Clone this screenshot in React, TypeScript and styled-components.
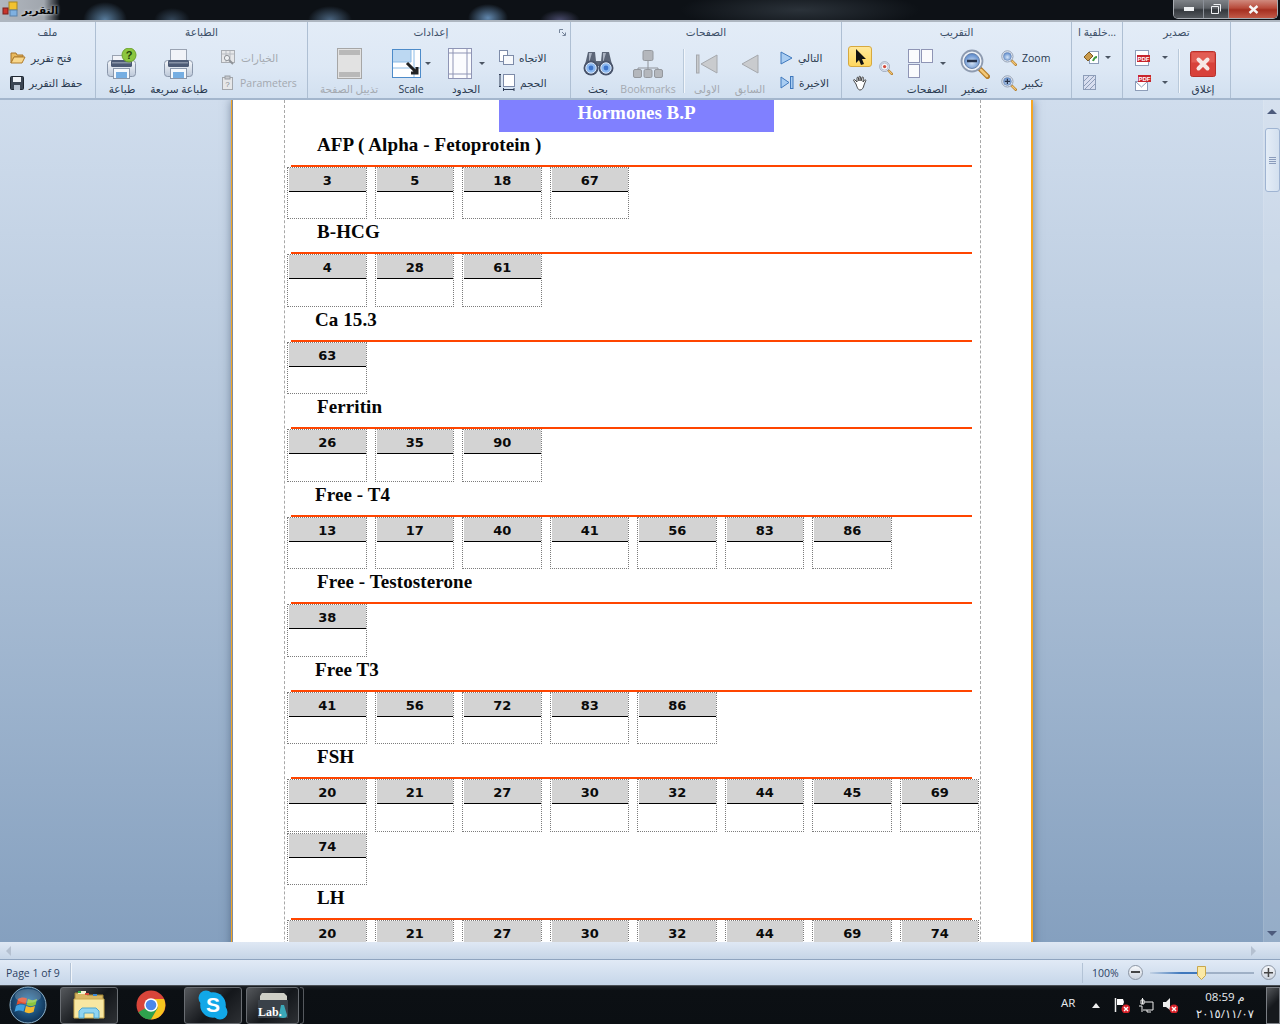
import React from 'react'
import styled, { createGlobalStyle } from 'styled-components'

const GlobalStyle = createGlobalStyle`
  html, body { margin: 0; padding: 0; background: #0c0f13; }
  #root { width: 1280px; height: 1024px; overflow: hidden; }
`

const UI_FONT = `"Open Sans", "DejaVu Sans", sans-serif`

const Screen = styled.div`
  width: 1280px;
  height: 1024px;
  display: flex;
  flex-direction: column;
  overflow: hidden;
  font-family: ${UI_FONT};
`

/* ---------- title bar ---------- */
const TitleBar = styled.div`
  height: 22px;
  flex: none;
  box-sizing: border-box;
  display: flex;
  align-items: center;
  padding: 0 2px 0 2px;
  border-bottom: 2px solid #aeb6c0;
  background:
    linear-gradient(90deg, rgba(186, 192, 200, 0.95) 0, rgba(186, 192, 200, 0.85) 44px, rgba(186, 192, 200, 0) 60px),
    radial-gradient(ellipse 22px 18px at 105px 20px, rgba(120, 170, 215, 0.7), transparent),
    radial-gradient(ellipse 18px 12px at 172px 20px, rgba(110, 150, 190, 0.4), transparent),
    radial-gradient(ellipse 22px 14px at 330px 20px, rgba(125, 170, 215, 0.55), transparent),
    radial-gradient(ellipse 20px 14px at 488px 18px, rgba(125, 175, 225, 0.75), transparent),
    radial-gradient(ellipse 20px 10px at 560px 20px, rgba(130, 130, 190, 0.5), transparent),
    radial-gradient(ellipse 120px 20px at 800px 10px, rgba(50, 58, 66, 0.8), transparent),
    #0d1116;
`

const TitleText = styled.span`
  margin-left: 2px;
  font-size: 10.5px;
  font-weight: 700;
  color: #060606;
  text-shadow: 0 0 3px #eef2f6;
`

const WindowButtons = styled.div`
  margin-left: auto;
  display: flex;
  height: 18px;
  align-self: flex-start;
  border: 1px solid #a8acb2;
  border-top: 0;
  border-radius: 0 0 5px 5px;
  overflow: hidden;
`

const WindowButton = styled.div<{ $w: number; $close?: boolean }>`
  width: ${p => p.$w}px;
  display: flex;
  align-items: center;
  justify-content: center;
  border-left: 1px solid #8b9098;
  background: ${p =>
    p.$close
      ? 'linear-gradient(#d08a7e 0, #b84a3a 45%, #a52f20 55%, #c25a48 100%)'
      : 'linear-gradient(#7f8388 0, #5d6166 45%, #34383d 55%, #55595e 100%)'};
  &:first-child { border-left: 0; }
`

/* ---------- ribbon ---------- */
const Ribbon = styled.div`
  height: 78px;
  flex: none;
  display: flex;
  background: linear-gradient(#e3ecf7 0, #dde8f5 60%, #d2e0f0 100%);
  border-bottom: 2px solid #a3b6cd;
  box-sizing: border-box;
`

const Group = styled.section<{ $w: number }>`
  position: relative;
  width: ${p => p.$w}px;
  flex: none;
  box-sizing: border-box;
  border-right: 1px solid #aebfd3;
  display: flex;
  flex-direction: column;
`

const GroupTitle = styled.div<{ $shift?: number }>`
  height: 20px;
  margin-bottom: 3px;
  padding-right: ${p => p.$shift ?? 0}px;
  flex: none;
  display: flex;
  align-items: center;
  justify-content: center;
  font-size: 10.5px;
  color: #3c4f68;
  white-space: nowrap;
`

const Launcher = styled.span`
  position: absolute;
  top: 7px;
  right: 4px;
  width: 7px;
  height: 7px;
  display: flex;
`

const GroupBody = styled.div<{ $pad: number }>`
  flex: 1;
  display: flex;
  align-items: flex-start;
  padding-left: ${p => p.$pad}px;
`

const BigButton = styled.div<{ $w: number; $off?: boolean }>`
  width: ${p => p.$w}px;
  flex: none;
  display: flex;
  flex-direction: column;
  align-items: center;
  color: ${p => (p.$off ? '#a4a9b0' : '#2a3a50')};
`

const BigIcon = styled.div<{ $gap?: number }>`
  height: 37px;
  display: flex;
  align-items: center;
  gap: ${p => p.$gap ?? 7}px;
`

const BigLabel = styled.div`
  height: 15px;
  line-height: 15px;
  font-size: 10.5px;
  white-space: nowrap;
`

const Stack = styled.div<{ $ml?: number }>`
  display: flex;
  flex-direction: column;
  flex: none;
  margin-left: ${p => p.$ml ?? 0}px;
`

const SmallButton = styled.div<{ $off?: boolean; $gap?: number }>`
  height: 25px;
  display: flex;
  align-items: center;
  gap: ${p => p.$gap ?? 5}px;
  padding: 0 3px;
  font-size: 10.5px;
  white-space: nowrap;
  color: ${p => (p.$off ? '#a4a9b0' : '#2a3a50')};
`

const Separator = styled.div<{ $l: number; $r: number }>`
  width: 1px;
  height: 44px;
  margin: 4px ${p => p.$r}px 0 ${p => p.$l}px;
  flex: none;
  background: #b9c9da;
  box-shadow: 1px 0 0 #f2f6fb;
`

const DropArrow = styled.span`
  width: 0;
  height: 0;
  flex: none;
  border-style: solid;
  border-width: 3px 3px 0;
  border-color: #4b5563 transparent transparent;
`

const CursorColumn = styled.div`
  display: flex;
  flex-direction: column;
  align-items: center;
  width: 24px;
  margin-top: 1px;
`

const CursorButton = styled.div`
  width: 24px;
  height: 21px;
  box-sizing: border-box;
  border: 1px solid #d7a93f;
  border-radius: 3px;
  background: linear-gradient(#ffe89a, #ffd75e);
  display: flex;
  align-items: center;
  justify-content: center;
`

const HandSlot = styled.div`
  margin-top: 8px;
  display: flex;
`

const MiniLens = styled.div`
  margin: 16px 10px 0 7px;
  display: flex;
`

/* ---------- viewer ---------- */
const Viewer = styled.div`
  flex: 1;
  min-height: 0;
  display: flex;
  background: linear-gradient(#d0dded 0, #b4c6db 40%, #85a0bf 100%);
`

const PageArea = styled.div`
  flex: 1;
  overflow: hidden;
  padding-left: 231px;
`

const Sheet = styled.div`
  width: 802px;
  height: 1100px;
  box-sizing: border-box;
  background: #fff;
  border-left: 1px solid #f5a623;
  border-right: 2px solid #f5a623;
  box-shadow: 0 0 9px rgba(40, 60, 90, 0.5), inset 1px 0 0 #7d8ba0;
  padding-left: 52px;
`

const Column = styled.div`
  width: 697px;
  height: 100%;
  box-sizing: border-box;
  border-left: 1px dashed #a8a8a8;
  border-right: 1px dashed #a8a8a8;
  padding-left: 2px;
`

const Band = styled.div`
  width: 275px;
  height: 31.5px;
  margin-left: 212px;
  background: #8080ff;
  color: #fff;
  font: 700 19px/26px "Liberation Serif", serif;
  text-align: center;
`

const Heading = styled.h2<{ $indent: number }>`
  margin: 0 0 0 4px;
  width: 681px;
  height: 35px;
  box-sizing: border-box;
  padding: 1px 0 0 ${p => p.$indent}px;
  border-bottom: 2px solid #ff4500;
  font: 700 19px/24px "Liberation Serif", serif;
  letter-spacing: 0.1px;
  color: #050505;
  white-space: pre;
`

const Cells = styled.div`
  display: grid;
  grid-template-columns: repeat(8, 79.5px);
  column-gap: 8px;
  grid-auto-rows: 52.5px;
  row-gap: 1px;
`

const Cell = styled.div`
  box-sizing: border-box;
  border: 1px dotted #7c7c7c;
  padding-left: 1px;
`

const CellHead = styled.div`
  height: 24px;
  box-sizing: border-box;
  background: #d3d3d3;
  border-bottom: 1px solid #000;
  font: 700 13px/25px "DejaVu Sans", sans-serif;
  color: #0a0a0a;
  text-align: center;
`

const VScroll = styled.div`
  width: 17px;
  flex: none;
  display: flex;
  flex-direction: column;
  align-items: center;
  background: rgba(255, 255, 255, 0.13);
  border-left: 1px solid rgba(255, 255, 255, 0.1);
  box-sizing: border-box;
`

const ArrowUp = styled.span`
  margin-top: 9px;
  width: 0;
  height: 0;
  border-style: solid;
  border-width: 0 5px 5px;
  border-color: transparent transparent #4d5b7c;
`

const Thumb = styled.div`
  width: 15px;
  height: 64px;
  margin-top: 14px;
  box-sizing: border-box;
  border: 1px solid #9fb4d2;
  border-radius: 3px;
  background: linear-gradient(90deg, #e4edf7, #d3e0ef);
  display: flex;
  align-items: center;
  justify-content: center;
`

const Grip = styled.div`
  width: 7px;
  height: 7px;
  background: repeating-linear-gradient(#8a9cbc 0 1px, transparent 1px 2px);
`

const ArrowDown = styled.span`
  margin-top: auto;
  margin-bottom: 6px;
  width: 0;
  height: 0;
  border-style: solid;
  border-width: 5px 5px 0;
  border-color: #4d5b7c transparent transparent;
`

const HScroll = styled.div`
  height: 17px;
  flex: none;
  display: flex;
  align-items: center;
  justify-content: space-between;
  padding: 0 24px 0 6px;
  background: linear-gradient(#dfe8f4, #c6d5e7);
`

const HArrow = styled.span<{ $dir: 'left' | 'right' }>`
  width: 0;
  height: 0;
  border-style: solid;
  border-width: 5px 0 5px 5px;
  border-color: transparent transparent transparent #b4c0d0;
  transform: ${p => (p.$dir === 'left' ? 'rotate(180deg)' : 'none')};
`

/* ---------- status bar ---------- */
const StatusBar = styled.div`
  height: 26px;
  flex: none;
  box-sizing: border-box;
  display: flex;
  align-items: center;
  border-top: 1px solid #8fa4bf;
  background: linear-gradient(#e1eaf6, #c6d6e9);
  font-size: 10.5px;
  color: #2c4163;
`

const PageInfo = styled.div`
  width: 64px;
  padding-left: 6px;
  border-right: 1px solid #b3c3d6;
  box-shadow: 1px 0 0 #f1f5fa;
  line-height: 20px;
`

const ZoomArea = styled.div`
  margin-left: auto;
  width: 188px;
  height: 20px;
  display: flex;
  align-items: center;
  padding-left: 9px;
  border-left: 1px solid #b3c3d6;
`

const ZoomValue = styled.span`
  width: 36px;
  flex: none;
`

const Round = styled.span`
  width: 15px;
  height: 15px;
  flex: none;
  box-sizing: border-box;
  border: 1px solid #8b95a3;
  border-radius: 50%;
  background: linear-gradient(#f6f8fb, #cdd4de);
  display: flex;
  align-items: center;
  justify-content: center;
`

const Track = styled.div`
  position: relative;
  width: 104px;
  height: 2px;
  margin: 0 7px;
  flex: none;
  background: linear-gradient(90deg, #c3d2e4 0, #3f78bd 30%, #3f78bd 48%, #9fb0c6 49%, #9fb0c6 100%);
`

const Knob = styled.span`
  position: absolute;
  left: 47px;
  top: -6px;
  display: flex;
`

/* ---------- taskbar ---------- */
const Taskbar = styled.div`
  height: 39px;
  flex: none;
  display: flex;
  align-items: center;
  background: linear-gradient(#1b1f24 0, #0c1014 12%, #0b0f13 100%);
  border-top: 1px solid #4a4f55;
  box-sizing: border-box;
`

const Orb = styled.div`
  width: 56px;
  margin-right: 4px;
  display: flex;
  justify-content: center;
`

const TaskButton = styled.div<{ $w: number; $plain?: boolean }>`
  width: ${p => p.$w}px;
  height: 37px;
  margin-right: 4px;
  flex: none;
  box-sizing: border-box;
  display: flex;
  align-items: center;
  justify-content: center;
  border-radius: 3px;
  border: 1px solid ${p => (p.$plain ? 'transparent' : '#6a6e73')};
  background: ${p =>
    p.$plain ? 'none' : 'linear-gradient(135deg, #55585c 0, #2a2d31 35%, #14171b 55%, #2d3034 100%)'};
`

const TaskEdge = styled.div`
  width: 4px;
  height: 37px;
  margin-left: -3px;
  border: 1px solid #55595e;
  border-left: 0;
  border-radius: 0 3px 3px 0;
  box-sizing: border-box;
`

const Tray = styled.div`
  margin-left: auto;
  display: flex;
  align-items: center;
  color: #e8ecf0;
`

const Lang = styled.span`
  font-size: 11.5px;
  width: 31px;
  padding-bottom: 6px;
`

const TrayIcons = styled.div`
  display: flex;
  align-items: center;
  gap: 8px;
  svg:first-child { margin-right: 6px; }
`

const Clock = styled.div`
  width: 72px;
  margin-left: 11px;
  font-size: 11.5px;
  line-height: 17px;
  text-align: center;
`

const DateLine = styled.div`
  direction: ltr;
  unicode-bidi: bidi-override;
`

const ShowDesktop = styled.div`
  width: 14px;
  height: 37px;
  margin-left: 5px;
  box-sizing: border-box;
  border: 1px solid #7a7e84;
  background: linear-gradient(135deg, #55585c, #16191d 50%);
`

/* ---------- icons ---------- */
const FolderIcon = () => (
  <svg width="16" height="12" viewBox="0 0 16 12">
    <path d="M1 1h5l1 2h6v2H4L1 11z" fill="#e8b95e" stroke="#a8752a" />
    <path d="M1 11l3-6h11l-3 6z" fill="#f8d78c" stroke="#b07c2c" />
  </svg>
)

const SaveIcon = () => (
  <svg width="14" height="14" viewBox="0 0 14 14">
    <rect x=".5" y=".5" width="13" height="13" rx="1" fill="#3b4552" stroke="#1f2731" />
    <rect x="3" y="1" width="8" height="5" fill="#eef2f7" />
    <rect x="4" y="9" width="6" height="5" fill="#b9c4d2" />
  </svg>
)

const Printer = ({ badge }: { badge?: boolean }) => (
  <svg width="32" height="32" viewBox="0 0 32 32">
    <defs>
      <linearGradient id="printerBody" x1="0" y1="0" x2="0" y2="1">
        <stop offset="0" stopColor="#f7f9fc" />
        <stop offset="1" stopColor="#bcc8d9" />
      </linearGradient>
    </defs>
    <rect x={badge ? 6.5 : 7.5} y={badge ? 7.5 : 1.5} width="16" height="12" fill="#f1f3f8" stroke="#9aa3b2" />
    <rect x="1.5" y="12.5" width="28" height="16" rx="3" fill="url(#printerBody)" stroke="#8a97ab" />
    <rect x="5" y="12" width="21" height="7" rx="1.5" fill="#4c5a75" />
    <rect x="6" y="14" width="19" height="1.5" fill="#8691a6" />
    <rect x="7.5" y="20.5" width="16" height="10" fill="#f5f8fc" stroke="#8a97ab" />
    <rect x="10" y="24" width="11" height="6" fill="#76aee2" />
    {badge && (
      <g>
        <circle cx="23" cy="7" r="7" fill="#8cc63f" stroke="#6ba12c" />
        <text x="23" y="11" fontSize="11" fontWeight="700" textAnchor="middle" fill="#23420a" fontFamily="Liberation Sans">?</text>
      </g>
    )}
  </svg>
)

const OptionsIcon = () => (
  <svg width="15" height="15" viewBox="0 0 15 15">
    <rect x=".5" y=".5" width="13" height="12" fill="#e6e7e9" stroke="#a9adb3" />
    <path d="M1 4h12M5 1v11M9 1v11" stroke="#b7bbc1" />
    <circle cx="6" cy="8" r="2.6" fill="#eef0f2" stroke="#8f9399" />
    <path d="M8 10l4 4" stroke="#8f9399" strokeWidth="2" />
  </svg>
)

const ParamsIcon = () => (
  <svg width="14" height="15" viewBox="0 0 14 15">
    <rect x="1.5" y="2.5" width="10" height="12" fill="#e6e7e9" stroke="#a3a7ad" />
    <rect x="4" y="1" width="5" height="3" fill="#c7cacf" stroke="#9a9ea4" />
    <text x="6.5" y="12" fontSize="8" textAnchor="middle" fill="#85898f" fontFamily="Liberation Sans">?</text>
  </svg>
)

const FooterIcon = () => (
  <svg width="25" height="31" viewBox="0 0 25 31">
    <rect x=".5" y=".5" width="24" height="30" fill="#e2e2e2" stroke="#a6a6a6" />
    <rect x="2" y="2" width="21" height="5" fill="#b9b9b9" />
    <rect x="2" y="24" width="21" height="5" fill="#b9b9b9" />
  </svg>
)

const ScaleIcon = () => (
  <svg width="29" height="29" viewBox="0 0 29 29">
    <rect x=".5" y=".5" width="28" height="28" fill="#fff" stroke="#4d8bc9" />
    <rect x="1" y="1" width="18" height="12" fill="#bcd8f2" />
    <path d="M1 13h18V1M1 19h27M22 1v27" stroke="#8dbce6" fill="none" />
    <path d="M15 14l9 9M19 24h6v-6" stroke="#222" strokeWidth="3" fill="none" />
  </svg>
)

const MarginsIcon = () => (
  <svg width="24" height="31" viewBox="0 0 24 31">
    <rect x=".5" y=".5" width="23" height="30" fill="#fbfcfe" stroke="#8f95b5" />
    <path d="M5 0v31M19 0v31M0 5h24M0 26h24" stroke="#8f95b5" />
  </svg>
)

const OrientIcon = () => (
  <svg width="15" height="15" viewBox="0 0 15 15">
    <rect x=".5" y=".5" width="8" height="11" fill="#fff" stroke="#7d8ba8" />
    <rect x="4.5" y="5.5" width="10" height="9" fill="#f7f9fc" stroke="#7d8ba8" />
  </svg>
)

const SizeIcon = () => (
  <svg width="16" height="17" viewBox="0 0 16 17">
    <rect x="4.5" y=".5" width="11" height="12" fill="#fff" stroke="#7d8ba8" />
    <path d="M1 0v13M0 .5h2M0 12.5h2M4 15.5h11M4.5 14v3M15 14v3" stroke="#2d3b55" />
  </svg>
)

const Binoculars = () => (
  <svg width="31" height="26" viewBox="0 0 31 26">
    <path d="M5 1h7l1 9h5l1-9h7l4 17H20l-2-3h-5l-2 3H1z" fill="#5c6678" />
    <path d="M6 2h3l-3 10zM20 2h3l-3 10z" fill="#aab3c2" />
    <circle cx="8" cy="17" r="7.5" fill="#48536a" />
    <circle cx="23" cy="17" r="7.5" fill="#48536a" />
    <circle cx="8" cy="17" r="5.2" fill="#8cb9f0" stroke="#dbe7f8" />
    <circle cx="23" cy="17" r="5.2" fill="#8cb9f0" stroke="#dbe7f8" />
    <circle cx="8" cy="17" r="2.4" fill="#3e75cc" />
    <circle cx="23" cy="17" r="2.4" fill="#3e75cc" />
  </svg>
)

const TreeIcon = () => (
  <svg width="30" height="28" viewBox="0 0 30 28">
    <path d="M15 11v7M5 22v-4h20v4M15 18v4" stroke="#8f9399" fill="none" />
    <rect x="10" y=".5" width="10" height="10" rx="1.5" fill="#b4b7bc" stroke="#94989e" />
    <rect x=".5" y="19.5" width="8" height="8" rx="1.5" fill="#b4b7bc" stroke="#94989e" />
    <rect x="11" y="19.5" width="8" height="8" rx="1.5" fill="#b4b7bc" stroke="#94989e" />
    <rect x="21.5" y="19.5" width="8" height="8" rx="1.5" fill="#b4b7bc" stroke="#94989e" />
  </svg>
)

const GreyFirst = () => (
  <svg width="22" height="20" viewBox="0 0 22 20">
    <rect x=".5" y="1" width="2.5" height="18" fill="#c9cbce" stroke="#a5a8ad" />
    <path d="M21 1v18L5 10z" fill="#c9cbce" stroke="#a5a8ad" />
  </svg>
)

const GreyPrev = () => (
  <svg width="18" height="20" viewBox="0 0 18 20">
    <path d="M17 1v18L1 10z" fill="#c9cbce" stroke="#a5a8ad" />
  </svg>
)

const BlueNext = () => (
  <svg width="13" height="14" viewBox="0 0 13 14">
    <path d="M1 1v12l11-6z" fill="#a9cdf2" stroke="#3f78bd" />
  </svg>
)

const BlueLast = () => (
  <svg width="14" height="13" viewBox="0 0 14 13">
    <path d="M1 1v11l8-5.5z" fill="#a9cdf2" stroke="#3f78bd" />
    <rect x="10.5" y=".5" width="2.5" height="12" fill="#a9cdf2" stroke="#3f78bd" />
  </svg>
)

const ArrowCursor = () => (
  <svg width="11" height="16" viewBox="0 0 11 16">
    <path d="M1 0v14l3-3 2 5 3-1-2-5h4z" fill="#111" />
  </svg>
)

const HandIcon = () => (
  <svg width="16" height="16" viewBox="0 0 16 16">
    <path d="M4 9L2 6c-1-1 0-2 1-1l2 2V3c0-1 1-1 1.5 0l.5 3V2c0-1 1.5-1 1.5 0l.5 4 1-3.5c.3-1 1.5-.7 1.300.3L11 7l1.500-2c.7-.8 1.700 0 1.200.8L12 10c-.5 3-2 5-4 5-2 0-3-3-4-6z" fill="#fff" stroke="#333" strokeWidth=".9" />
  </svg>
)

const Lens = ({ size, sign, tiny }: { size: number; sign?: '+' | '-'; tiny?: boolean }) => (
  <svg width={size} height={size} viewBox="0 0 30 30">
    <defs>
      <radialGradient id="lensGlass" cx=".5" cy=".6" r=".6">
        <stop offset="0" stopColor="#d6e6f8" />
        <stop offset="1" stopColor="#5584c8" />
      </radialGradient>
    </defs>
    <path d="M18 18l9.5 9.5" stroke="#b67d2a" strokeWidth="5" strokeLinecap="round" />
    <path d="M21 21l6 6" stroke="#f2c878" strokeWidth="2.5" strokeLinecap="round" />
    <circle cx="12" cy="12" r="10.5" fill="#eef2f8" stroke="#8e9bb0" strokeWidth="1.8" />
    <circle cx="12" cy="12" r="7.5" fill={tiny ? '#f7f8fa' : 'url(#lensGlass)'} stroke="#6c86ad" />
    {tiny && <circle cx="12" cy="12" r="3.5" fill="#d24b3c" />}
    {sign && <path d="M7 12h10" stroke="#26324a" strokeWidth="2.5" />}
    {sign === '+' && <path d="M12 7v10" stroke="#26324a" strokeWidth="2.5" />}
  </svg>
)

const PagesIcon = () => (
  <svg width="25" height="29" viewBox="0 0 25 29">
    <rect x=".5" y=".5" width="11" height="13" fill="#fafbfd" stroke="#8f95b5" />
    <rect x="13.5" y=".5" width="11" height="13" fill="#fafbfd" stroke="#8f95b5" />
    <rect x=".5" y="15.5" width="11" height="13" fill="#fafbfd" stroke="#8f95b5" />
  </svg>
)

const PaintIcon = () => (
  <svg width="16" height="15" viewBox="0 0 16 15">
    <rect x="6.5" y="1.5" width="9" height="12" fill="#fff" stroke="#8d9db8" />
    <path d="M1 7l5-5 4 4-5 5z" fill="#c99a4c" stroke="#7c5b22" />
    <path d="M10 11c1-3 2-4 4-4" stroke="#3f9a3f" strokeWidth="2" fill="none" />
  </svg>
)

const HatchIcon = () => (
  <svg width="13" height="15" viewBox="0 0 13 15">
    <rect x=".5" y=".5" width="12" height="14" fill="#d8deef" stroke="#8d9db8" />
    <path d="M1 6l5-5M1 11l10-10M2 14L12 4M7 14l5-5" stroke="#8d9db8" />
  </svg>
)

const PdfIcon = ({ mail }: { mail?: boolean }) => (
  <svg width="16" height="16" viewBox="0 0 16 16">
    {mail ? (
      <g>
        <rect x=".5" y="6.5" width="12" height="9" fill="#fff" stroke="#8d9db8" />
        <path d="M1 7l5.500 5L12 7" stroke="#8d9db8" fill="none" />
      </g>
    ) : (
      <rect x=".5" y=".5" width="13" height="15" fill="#fff" stroke="#8d9db8" />
    )}
    <rect x={mail ? 3 : 2} y={mail ? 0 : 5} width="13" height="7" fill="#c8252c" />
    <text x={mail ? 9.5 : 8.5} y={mail ? 5.8 : 10.8} fontSize="6" fontWeight="700" textAnchor="middle" fill="#fff" fontFamily="Liberation Sans">PDF</text>
  </svg>
)

const CloseIcon = () => (
  <svg width="26" height="26" viewBox="0 0 26 26">
    <rect x=".5" y=".5" width="25" height="25" rx="2" fill="#d8413a" stroke="#b7302a" />
    <rect x="1.5" y="1.5" width="23" height="10" fill="#ea6f66" opacity=".6" />
    <path d="M8.5 8.5l9 9M17.5 8.500l-9 9" stroke="#f6e7e5" strokeWidth="4" strokeLinecap="round" />
  </svg>
)

const LauncherIcon = () => (
  <svg width="7" height="7" viewBox="0 0 7 7">
    <path d="M.5 4V.5H4M3 3l3 3M3.5 6.5h3v-3" stroke="#76859a" fill="none" />
  </svg>
)

const WinOrb = () => (
  <svg width="38" height="38" viewBox="0 0 38 38">
    <defs>
      <radialGradient id="orbFill" cx=".5" cy=".45" r=".6">
        <stop offset="0" stopColor="#2f7fb8" />
        <stop offset="1" stopColor="#0d2a4a" />
      </radialGradient>
    </defs>
    <circle cx="19" cy="19" r="18" fill="url(#orbFill)" stroke="#8fb4cc" strokeWidth="1" />
    <path d="M9 13c3-2 6-2 9-.5l-1.5 6c-3-1.5-6-1.5-9 .5z" fill="#e2502f" />
    <path d="M19 13c3 1.5 6 1.5 9 0l-1.5 6c-3 1.5-6 1.5-9 0z" fill="#8cc63f" />
    <path d="M7 20c3-2 6-2 9-.5l-1.5 6c-3-1.5-6-1.5-9 .5z" fill="#3fa0e0" />
    <path d="M17 20c3 1.5 6 1.5 9 0l-1.5 6c-3 1.5-6 1.5-9 0z" fill="#f4b92f" />
    <ellipse cx="19" cy="10" rx="13" ry="7" fill="#fff" opacity=".2" />
  </svg>
)

const ExplorerIcon = () => (
  <svg width="32" height="30" viewBox="0 0 32 30">
    <path d="M2 3h10l2 2h16v22H2z" fill="#d9b764" stroke="#a08636" />
    <rect x="5" y="1" width="8" height="3" fill="#f4f0d0" />
    <rect x="5" y="1" width="3" height="2" fill="#32b14a" />
    <rect x="12" y="3" width="4" height="2" fill="#d34a3a" />
    <rect x="20" y="4" width="4" height="2" fill="#3a86d3" />
    <path d="M1 9h30v19H1z" fill="#f8e7a2" stroke="#c9a94f" />
    <path d="M6 28v-7l3-3h14l3 3v7h-5v-5H11v5z" fill="#8fd4f2" stroke="#4ea6d0" />
  </svg>
)

const ChromeIcon = () => (
  <svg width="30" height="30" viewBox="0 0 30 30">
    <circle cx="15" cy="15" r="14.5" fill="#d8453a" />
    <path d="M15 15l-12.600 7.300A14.500 14.500 0 0 0 15 29.500l7.300-12z" fill="#2fa24d" />
    <path d="M15 9h13A14.500 14.500 0 0 1 15 29.500l7-12z" fill="#f7c51e" />
    <circle cx="15" cy="15" r="6.8" fill="#fff" />
    <circle cx="15" cy="15" r="5.3" fill="#4b87ea" />
  </svg>
)

const SkypeIcon = () => (
  <svg width="30" height="30" viewBox="0 0 30 30">
    <circle cx="8" cy="8" r="7.5" fill="#12a8e8" />
    <circle cx="22" cy="22" r="7.5" fill="#12a8e8" />
    <circle cx="15" cy="15" r="12.8" fill="#12a8e8" />
    <text x="15" y="22" fontSize="21" fontWeight="700" textAnchor="middle" fill="#fff" fontFamily="Liberation Sans">S</text>
  </svg>
)

const LabIcon = () => (
  <svg width="32" height="28" viewBox="0 0 32 28">
    <path d="M3 5l2-3h22l3 3v6H3z" fill="#cfcfc6" />
    <path d="M1 9h30v18H1z" fill="#3a4149" />
    <path d="M24 14h3l3 10c0 2-1 3-4 3s-5-1-4-3z" fill="#3aa8b8" />
    <text x="1" y="25" fontSize="12" fontWeight="700" fill="#fff" fontFamily="Liberation Serif">Lab.</text>
  </svg>
)

const BlockedBadge = () => (
  <g>
    <circle cx="12" cy="12" r="4.5" fill="#d8232a" />
    <path d="M10 10l4 4M14 10l-4 4" stroke="#fff" strokeWidth="1.4" />
  </g>
)

const FlagIcon = () => (
  <svg width="16" height="16" viewBox="0 0 16 16">
    <path d="M1.5 1v14" stroke="#eee" strokeWidth="1.5" />
    <path d="M3 2h6l1 3-1 3H3z" fill="#fff" />
    <BlockedBadge />
  </svg>
)

const NetworkIcon = () => (
  <svg width="16" height="16" viewBox="0 0 16 16">
    <path d="M4.500 1v6M3 3h3v4H3zM6 5h9v8H5M9 13v2h4M1 9h3v6" stroke="#eee" fill="none" />
  </svg>
)

const SpeakerIcon = () => (
  <svg width="16" height="16" viewBox="0 0 16 16">
    <path d="M1 5h3l4-4v12L4 10H1z" fill="#eee" />
    <BlockedBadge />
  </svg>
)

const SliderKnob = () => (
  <svg width="9" height="14" viewBox="0 0 9 14">
    <path d="M.5.5h8v9l-4 4-4-4z" fill="#fbe9a6" stroke="#c8a74e" />
  </svg>
)

const sections: { title: string; indent: number; cells: number[] }[] = [
  { title: 'AFP ( Alpha - Fetoprotein )', indent: 26, cells: [3, 5, 18, 67] },
  { title: 'B-HCG', indent: 26, cells: [4, 28, 61] },
  { title: 'Ca 15.3', indent: 24, cells: [63] },
  { title: 'Ferritin', indent: 26, cells: [26, 35, 90] },
  { title: 'Free - T4', indent: 24, cells: [13, 17, 40, 41, 56, 83, 86] },
  { title: 'Free - Testosterone', indent: 26, cells: [38] },
  { title: 'Free T3', indent: 24, cells: [41, 56, 72, 83, 86] },
  { title: 'FSH', indent: 26, cells: [20, 21, 27, 30, 32, 44, 45, 69, 74] },
  { title: 'LH', indent: 26, cells: [20, 21, 27, 30, 32, 44, 69, 74] },
]

const App = () => {
  return (
    <Screen>
      <GlobalStyle />
      <TitleBar>
        <svg width="18" height="18" viewBox="0 0 18 18">
          <rect x="7" y="1" width="8" height="8" fill="#f2c230" stroke="#a88620" />
          <rect x="8" y="9" width="7" height="6" fill="#7fb0e0" stroke="#5a80a8" />
          <rect x="1" y="7" width="5" height="6" fill="#c8352c" stroke="#7c1f1a" />
        </svg>
        <TitleText>التقرير</TitleText>
        <WindowButtons>
          <WindowButton $w={29}>
            <svg width="10" height="4"><rect width="10" height="4" fill="#eef0f2" /></svg>
          </WindowButton>
          <WindowButton $w={24}>
            <svg width="10" height="10" viewBox="0 0 10 10">
              <path d="M2.5.5h7v7M.5 2.5h7v7h-7z" fill="none" stroke="#eef0f2" />
            </svg>
          </WindowButton>
          <WindowButton $w={48} $close>
            <svg width="11" height="9" viewBox="0 0 11 9">
              <path d="M1.5 1l8 7M9.5 1l-8 7" stroke="#f6f6f6" strokeWidth="2.4" />
            </svg>
          </WindowButton>
        </WindowButtons>
      </TitleBar>

      <Ribbon>
        <Group $w={96}>
          <GroupTitle>ملف</GroupTitle>
          <GroupBody $pad={7}>
            <Stack>
              <SmallButton><FolderIcon />فتح تقرير</SmallButton>
              <SmallButton><SaveIcon />حفظ التقرير</SmallButton>
            </Stack>
          </GroupBody>
        </Group>

        <Group $w={212}>
          <GroupTitle>الطباعة</GroupTitle>
          <GroupBody $pad={6}>
            <BigButton $w={40}>
              <BigIcon><Printer badge /></BigIcon>
              <BigLabel>طباعة</BigLabel>
            </BigButton>
            <BigButton $w={74}>
              <BigIcon><Printer /></BigIcon>
              <BigLabel>طباعة سريعة</BigLabel>
            </BigButton>
            <Stack $ml={2}>
              <SmallButton $off><OptionsIcon />الخيارات</SmallButton>
              <SmallButton $off><ParamsIcon />Parameters</SmallButton>
            </Stack>
          </GroupBody>
        </Group>

        <Group $w={263}>
          <GroupTitle $shift={16}>إعدادات</GroupTitle>
          <Launcher><LauncherIcon /></Launcher>
          <GroupBody $pad={7}>
            <BigButton $w={68} $off>
              <BigIcon><FooterIcon /></BigIcon>
              <BigLabel>تذييل الصفحة</BigLabel>
            </BigButton>
            <BigButton $w={56}>
              <BigIcon $gap={4}><ScaleIcon /><DropArrow /></BigIcon>
              <BigLabel>Scale</BigLabel>
            </BigButton>
            <BigButton $w={54}>
              <BigIcon><MarginsIcon /><DropArrow /></BigIcon>
              <BigLabel>الحدود</BigLabel>
            </BigButton>
            <Stack $ml={3}>
              <SmallButton><OrientIcon />الاتجاه</SmallButton>
              <SmallButton><SizeIcon />الحجم</SmallButton>
            </Stack>
          </GroupBody>
        </Group>

        <Group $w={271}>
          <GroupTitle>الصفحات</GroupTitle>
          <GroupBody $pad={7}>
            <BigButton $w={40}>
              <BigIcon><Binoculars /></BigIcon>
              <BigLabel>بحث</BigLabel>
            </BigButton>
            <BigButton $w={60} $off>
              <BigIcon><TreeIcon /></BigIcon>
              <BigLabel>Bookmarks</BigLabel>
            </BigButton>
            <Separator $l={5} $r={5} />
            <BigButton $w={36} $off>
              <BigIcon><GreyFirst /></BigIcon>
              <BigLabel>الاولى</BigLabel>
            </BigButton>
            <BigButton $w={50} $off>
              <BigIcon><GreyPrev /></BigIcon>
              <BigLabel>السابق</BigLabel>
            </BigButton>
            <Stack $ml={2}>
              <SmallButton><BlueNext />التالي</SmallButton>
              <SmallButton><BlueLast />الاخيرة</SmallButton>
            </Stack>
          </GroupBody>
        </Group>

        <Group $w={230}>
          <GroupTitle>التقريب</GroupTitle>
          <GroupBody $pad={6}>
            <CursorColumn>
              <CursorButton><ArrowCursor /></CursorButton>
              <HandSlot><HandIcon /></HandSlot>
            </CursorColumn>
            <MiniLens><Lens size={14} tiny /></MiniLens>
            <BigButton $w={48}>
              <BigIcon><PagesIcon /><DropArrow /></BigIcon>
              <BigLabel>الصفحات</BigLabel>
            </BigButton>
            <BigButton $w={47}>
              <BigIcon><Lens size={30} sign="-" /></BigIcon>
              <BigLabel>تصغير</BigLabel>
            </BigButton>
            <Stack>
              <SmallButton><Lens size={16} />Zoom</SmallButton>
              <SmallButton><Lens size={16} sign="+" />تكبير</SmallButton>
            </Stack>
          </GroupBody>
        </Group>

        <Group $w={51}>
          <GroupTitle dir="ltr">خلفية ا...</GroupTitle>
          <GroupBody $pad={8}>
            <Stack>
              <SmallButton $gap={6}><PaintIcon /><DropArrow /></SmallButton>
              <SmallButton><HatchIcon /></SmallButton>
            </Stack>
          </GroupBody>
        </Group>

        <Group $w={108}>
          <GroupTitle>تصدير</GroupTitle>
          <GroupBody $pad={9}>
            <Stack>
              <SmallButton $gap={11}><PdfIcon /><DropArrow /></SmallButton>
              <SmallButton $gap={11}><PdfIcon mail /><DropArrow /></SmallButton>
            </Stack>
            <Separator $l={7} $r={4} />
            <BigButton $w={40}>
              <BigIcon><CloseIcon /></BigIcon>
              <BigLabel>إغلاق</BigLabel>
            </BigButton>
          </GroupBody>
        </Group>
      </Ribbon>

      <Viewer>
        <PageArea>
          <Sheet>
            <Column>
              <Band>Hormones B.P</Band>
              {sections.map(section => (
                <section key={section.title}>
                  <Heading $indent={section.indent}>{section.title}</Heading>
                  <Cells>
                    {section.cells.map(value => (
                      <Cell key={value}>
                        <CellHead>{value}</CellHead>
                      </Cell>
                    ))}
                  </Cells>
                </section>
              ))}
            </Column>
          </Sheet>
        </PageArea>
        <VScroll>
          <ArrowUp />
          <Thumb><Grip /></Thumb>
          <ArrowDown />
        </VScroll>
      </Viewer>

      <HScroll>
        <HArrow $dir="left" />
        <HArrow $dir="right" />
      </HScroll>

      <StatusBar>
        <PageInfo>Page 1 of 9</PageInfo>
        <ZoomArea>
          <ZoomValue>100%</ZoomValue>
          <Round>
            <svg width="9" height="9"><rect y="3" width="9" height="2" fill="#444" /></svg>
          </Round>
          <Track><Knob><SliderKnob /></Knob></Track>
          <Round>
            <svg width="9" height="9" viewBox="0 0 9 9"><path d="M0 4h9v1.5H0zM3.700 0h1.500v9H3.700z" fill="#444" /></svg>
          </Round>
        </ZoomArea>
      </StatusBar>

      <Taskbar>
        <Orb><WinOrb /></Orb>
        <TaskButton $w={58}><ExplorerIcon /></TaskButton>
        <TaskButton $w={58} $plain><ChromeIcon /></TaskButton>
        <TaskButton $w={58}><SkypeIcon /></TaskButton>
        <TaskButton $w={53}><LabIcon /></TaskButton>
        <TaskEdge />
        <Tray>
          <Lang>AR</Lang>
          <TrayIcons>
            <svg width="8" height="5"><path d="M0 5l4-5 4 5z" fill="#eee" /></svg>
            <FlagIcon />
            <NetworkIcon />
            <SpeakerIcon />
          </TrayIcons>
          <Clock>
            <div>08:59 م</div>
            <DateLine>٢٠١٥/١١/٠٧</DateLine>
          </Clock>
          <ShowDesktop />
        </Tray>
      </Taskbar>
    </Screen>
  )
}

export default App
